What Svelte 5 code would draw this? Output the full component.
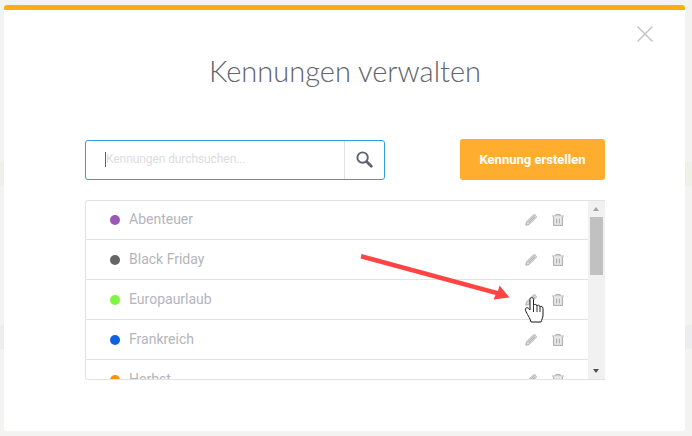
<script>
  const tags = [
    { name: "Abenteuer", color: "#9b59b6" },
    { name: "Black Friday", color: "#666666" },
    { name: "Europaurlaub", color: "#7ff63f" },
    { name: "Frankreich", color: "#0f62e0" },
    { name: "Herbst", color: "#f7920f" }
  ];
</script>

<div class="page">
  <div class="backdrop">
    <div class="strip green"></div>
    <div class="strip blue"></div>
  </div>

  <div class="modal">
    <button class="close" aria-label="Schließen">
      <svg width="18" height="18" viewBox="0 0 18 18">
        <path d="M1.5 1.5 L16.5 16.5 M16.5 1.5 L1.5 16.5" stroke="#c4c4c4" stroke-width="1.5" fill="none" />
      </svg>
    </button>

    <h1>Kennungen verwalten</h1>

    <div class="toolbar">
      <div class="search">
        <div class="field"><span class="caret"></span><span class="placeholder">Kennungen durchsuchen...</span></div>
        <div class="search-btn">
          <svg width="17" height="17" viewBox="0 0 17 17">
            <circle cx="6.6" cy="6.6" r="5.2" fill="none" stroke="#5c6273" stroke-width="1.9" />
            <path d="M10.8 10.8 L15.3 15.3" stroke="#5c6273" stroke-width="2.8" stroke-linecap="round" />
          </svg>
        </div>
      </div>
      <div class="create">Kennung erstellen</div>
    </div>

    <div class="list">
      <div class="rows">
        {#each tags as tag}
          <div class="row">
            <span class="dot" style="background: {tag.color}"></span>
            <span class="name">{tag.name}</span>
            <svg class="pencil" width="12" height="12" viewBox="0 0 12 12">
              <path d="M0.8 11.2 L1.4 8 L8.4 1 Q9.4 0.2 10.3 1 L11 1.7 Q11.8 2.6 11 3.6 L4 10.6 Z" fill="#dcdcde" stroke="#b0b0b4" stroke-width="1" stroke-linejoin="round" />
              <path d="M3 8.2 L9.2 2 M3.9 9.1 L10 3" stroke="#b0b0b4" stroke-width="0.9" />
            </svg>
            <svg class="trash" width="12" height="12" viewBox="0 0 12 12">
              <path d="M0 2 H12 M4 1.6 V0.5 H8 V1.6" fill="none" stroke="#b4b4b8" stroke-width="1.1" />
              <path d="M1.6 2.5 V11.4 H10.4 V2.5" fill="#ececee" stroke="#b4b4b8" stroke-width="1.3" />
              <path d="M4.6 4.6 V9.4 M7.4 4.6 V9.4" stroke="#b4b4b8" stroke-width="1.3" />
            </svg>
          </div>
        {/each}
      </div>
      <div class="scrollbar">
        <span class="up"></span>
        <div class="thumb"></div>
        <span class="down"></span>
      </div>
    </div>
  </div>

  <svg class="overlay" width="692" height="436" viewBox="0 0 692 436">
    <path d="M361.5 254 L498 291 L499.5 285.5 L509.5 297.5 L493.5 299.5 L495.5 295 L360.5 258.5 Z" fill="#ff4444" />
    <path d="M530 319 C528 315 525 311 525.5 309 C526 306.5 529 308 530 310 L530 299.5 C530 297 533.5 297 533.5 299.5 L533.5 305.5 C534 304 537 304 537 306 C537.5 304.6 540 305 540 307 C541 305.8 543 306.4 543 308.5 L543 315 C543 318 541.5 320 541 322 L531 322 Z" fill="#fff" stroke="#1a1a1a" stroke-width="1" stroke-linejoin="round" />
    <path d="M533.5 306 V312 M537 306 V312 M540 307 V312" stroke="#1a1a1a" stroke-width="0.9" />
  </svg>
</div>

<style>
  :global(body) {
    margin: 0;
    background: #f3f3f1;
  }
  .page {
    position: relative;
    width: 692px;
    height: 436px;
    box-sizing: border-box;
    padding: 5px 7px 5px 4px;
    overflow: hidden;
    font-family: Roboto, "Liberation Sans", sans-serif;
  }
  .backdrop {
    position: absolute;
    inset: 0;
  }
  .strip {
    position: absolute;
    left: 0;
    right: 0;
    height: 24px;
  }
  .green {
    top: 162px;
    background: #eef1e8;
  }
  .blue {
    top: 325px;
    background: #ebedee;
  }
  .modal {
    position: relative;
    height: 100%;
    box-sizing: border-box;
    background: #fff;
    border-top: 5px solid #ffac16;
    border-radius: 3px;
    padding: 0 80px 0 81px;
  }
  .close {
    position: absolute;
    top: 15px;
    right: 31px;
    width: 18px;
    height: 18px;
    padding: 0;
    border: 0;
    background: none;
    display: flex;
  }
  h1 {
    margin: 0;
    padding-top: 34px;
    height: 54px;
    line-height: 54px;
    text-align: center;
    font-family: Lato, sans-serif;
    font-weight: 300;
    font-size: 29px;
    color: #62636b;
  }
  .toolbar {
    display: flex;
    justify-content: space-between;
    align-items: center;
    margin-top: 41px;
  }
  .search {
    display: flex;
    box-sizing: border-box;
    width: 300px;
    height: 40px;
    border: 1px solid #2f9ee0;
    border-radius: 3px;
  }
  .field {
    flex: 1;
    display: flex;
    align-items: center;
    padding-left: 19px;
    font-size: 12px;
    color: #dcdcdf;
  }
  .placeholder {
    padding-bottom: 2px;
    letter-spacing: -0.08px;
  }
  .caret {
    width: 1px;
    height: 15px;
    background: #5c6273;
  }
  .search-btn {
    width: 39px;
    border-left: 1px solid #e2e2e2;
    display: flex;
    align-items: center;
    justify-content: center;
  }
  .create {
    width: 145px;
    height: 41px;
    line-height: 41px;
    text-align: center;
    background: #ffad2f;
    border-radius: 3px;
    color: #fff;
    font-size: 13px;
    font-weight: 700;
  }
  .list {
    display: flex;
    box-sizing: border-box;
    height: 180px;
    margin-top: 20px;
    border: 1px solid #e2e2e2;
    border-right: 0;
    border-radius: 3px 0 0 3px;
    overflow: hidden;
  }
  .rows {
    flex: 1;
    min-width: 0;
    overflow: hidden;
    margin-top: -1px;
  }
  .row {
    display: flex;
    align-items: center;
    box-sizing: border-box;
    height: 40px;
    padding: 0 24px 0 24px;
    border-bottom: 1px solid #e2e2e2;
  }
  .dot {
    width: 10px;
    height: 10px;
    border-radius: 50%;
    margin-right: 9px;
  }
  .name {
    flex: 1;
    padding-bottom: 2px;
    font-size: 14px;
    color: #b4b5bb;
  }
  .pencil {
    margin-right: 15px;
  }
  .scrollbar {
    position: relative;
    width: 17px;
    background: #f1f1f1;
  }
  .thumb {
    position: absolute;
    top: 16px;
    left: 2px;
    right: 2px;
    height: 58px;
    background: #c1c1c1;
  }
  .up,
  .down {
    position: absolute;
    left: 5px;
    width: 0;
    height: 0;
    border-left: 3.5px solid transparent;
    border-right: 3.5px solid transparent;
  }
  .up {
    top: 6px;
    border-bottom: 4px solid #a3a3a3;
  }
  .down {
    bottom: 6px;
    border-top: 4px solid #505050;
  }
  .overlay {
    position: absolute;
    top: 0;
    left: 0;
  }
</style>
